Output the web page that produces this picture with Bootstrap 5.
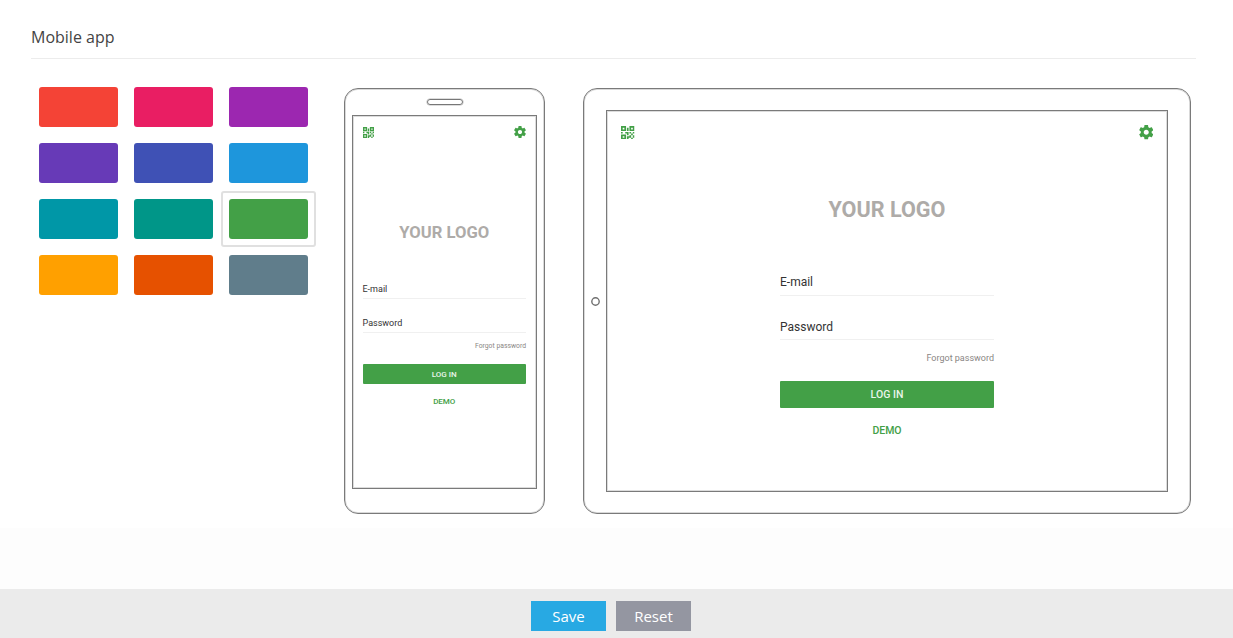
<!DOCTYPE html>
<html lang="en">
<head>
<meta charset="utf-8">
<meta name="viewport" content="width=device-width, initial-scale=1">
<title>Mobile app</title>
<link href="https://cdn.jsdelivr.net/npm/bootstrap@5.3.0/dist/css/bootstrap.min.css" rel="stylesheet">
<style>
body{font-family:"Open Sans",sans-serif;background:#fdfdfd;color:#444}
.page{height:638px}
.panel{height:528px;padding:26px 37px 0 31px;background:#fff}
.panel-title{font-size:16px;line-height:22px;height:33px;border-bottom:1px solid #ececec;margin:0}
.palette{display:grid;grid-template-columns:repeat(3,95px);grid-auto-rows:56px;width:285px;margin-top:20px}
.swatch{padding:6px;border:2px solid transparent;border-radius:3px}
.swatch span{display:block;height:40px;border-radius:3px}
.swatch.selected{border-color:#e0e0e0}
.device{border:1px solid #7a7a7a;box-shadow:inset 0 0 0 1px #d9d9d9;border-radius:14px;height:426px;margin-top:29px;font-family:Roboto,sans-serif}
.screen{border:1px solid #7a7a7a;box-shadow:inset 0 0 0 1px #dcdcdc;color:#333}
.phone{width:201px;margin-left:28px;padding:10px 7px 0}
.tablet{width:608px;margin-left:38px;padding:21px 22px 0 6px}
.speaker{width:36px;height:6px;border:1px solid #777;box-shadow:0 0 0 .5px #bbb;border-radius:3px;margin:0 auto 10px}
.phone .screen{height:374px;padding:10px 10px 0 9.5px}
.tablet .screen{width:562px;height:382px;padding:14px 14px 0 14px}
.home{width:9px;height:9px;margin-right:6.5px;margin-left:.5px;margin-bottom:21px;flex:none}
.green{color:#43a047}
.bar{line-height:0}
.logo{font-weight:700;color:#aeaba8;text-align:center}
.field{border-bottom:1px solid #f0f0f0}
.forgot{color:#8a8684;text-align:right}
.login{background:#43a047;color:#e9f5ea;border-radius:1px;font-weight:500;text-align:center}
.demo{font-weight:500;text-align:center}
.phone .bar{height:12px}
.phone .logo{font-size:16.6px;line-height:20px;margin-top:85px}
.phone .field{font-size:9px;line-height:12px;height:16px}
.phone .email{margin-top:40px}
.phone .password{margin-top:18px}
.phone .forgot{font-size:6.8px;line-height:10px;margin-top:8px}
.phone .login{font-size:8px;line-height:21px;height:20.5px;margin-top:12.5px}
.phone .demo{font-size:8px;line-height:12px;margin-top:12px}
.tablet .bar{height:15px}
.tablet .logo{font-size:21.6px;line-height:26px;margin-top:57px}
.tablet .form-box{width:214px;margin:0 auto}
.tablet .field{font-size:12px;line-height:16px;height:21px}
.tablet .email{margin-top:51px;height:22px}
.tablet .password{margin-top:23px}
.tablet .forgot{font-size:9px;line-height:12px;margin-top:12px}
.tablet .login{font-size:10.5px;line-height:27px;height:27px;margin-top:16.5px}
.tablet .demo{font-size:10.5px;line-height:14px;margin-top:16.5px}
.footer-bar{height:49px;background:#ebebeb;padding:12px 11px 0 0;gap:10px}
.action{width:75px;height:30px;padding:0;border:0;border-radius:0;color:#fff!important;font-size:15px;line-height:31px}
.save{background:#28a9e3!important}
.reset{background:#9496a1!important}
</style>
</head>
<body>
<svg class="d-none" xmlns="http://www.w3.org/2000/svg">
<symbol id="qr" viewBox="4 4 16 16"><path fill="currentColor" d="M4 4h6v6H4V4m16 0v6h-6V4h6m-6 11h2v-2h-2v-2h2v2h2v-2h2v2h-2v2h2v3h-2v2h-2v-2h-3v2h-2v-4h3v-1m2 0v3h2v-3h-2M4 20v-6h6v6H4M6 6v2h2V6H6m10 0v2h2V6h-2M6 16v2h2v-2H6m-2-5h2v2H4v-2m5 0h4v4h-2v-2H9v-2m2-5h2v4h-2V6z"/></symbol>
<symbol id="gear" viewBox="2 2 20 20"><path fill="currentColor" d="M19.43 12.98c.04-.32.07-.64.07-.98s-.03-.66-.07-.98l2.11-1.65c.19-.15.24-.42.12-.64l-2-3.46c-.12-.22-.39-.3-.61-.22l-2.49 1c-.52-.4-1.08-.73-1.69-.98l-.38-2.65C14.46 2.18 14.25 2 14 2h-4c-.25 0-.46.18-.49.42l-.38 2.65c-.61.25-1.17.59-1.69.98l-2.49-1c-.23-.09-.49 0-.61.22l-2 3.46c-.13.22-.07.49.12.64l2.11 1.65c-.04.32-.07.65-.07.98s.03.66.07.98l-2.11 1.65c-.19.15-.24.42-.12.64l2 3.46c.12.22.39.3.61.22l2.49-1c.52.4 1.08.73 1.69.98l.38 2.65c.03.24.24.42.49.42h4c.25 0 .46-.18.49-.42l.38-2.65c.61-.25 1.17-.59 1.69-.98l2.49 1c.23.09.49 0 .61-.22l2-3.46c.12-.22.07-.49-.12-.64l-2.11-1.65zM12 15.5c-1.93 0-3.5-1.57-3.5-3.5s1.57-3.5 3.5-3.5 3.5 1.57 3.5 3.5-1.57 3.5-3.5 3.5z"/></symbol>
</svg>
<div class="page d-flex flex-column justify-content-between">
<main class="panel">
<h1 class="panel-title fw-normal">Mobile app</h1>
<div class="d-flex align-items-start">
<div class="palette flex-shrink-0">
<div class="swatch"><span style="background:#f44336"></span></div>
<div class="swatch"><span style="background:#e91e63"></span></div>
<div class="swatch"><span style="background:#9c27b0"></span></div>
<div class="swatch"><span style="background:#673ab7"></span></div>
<div class="swatch"><span style="background:#3f51b5"></span></div>
<div class="swatch"><span style="background:#1e96dc"></span></div>
<div class="swatch"><span style="background:#0097a7"></span></div>
<div class="swatch"><span style="background:#009688"></span></div>
<div class="swatch selected"><span style="background:#43a047"></span></div>
<div class="swatch"><span style="background:#ffa000"></span></div>
<div class="swatch"><span style="background:#e65100"></span></div>
<div class="swatch"><span style="background:#607d8b"></span></div>
</div>
<section class="device phone flex-shrink-0">
<div class="speaker"></div>
<div class="screen">
<div class="bar green d-flex justify-content-between align-items-center"><svg width="11" height="11"><use href="#qr"/></svg><svg width="12" height="12"><use href="#gear"/></svg></div>
<div class="logo">YOUR LOGO</div>
<div class="field email">E-mail</div>
<div class="field password">Password</div>
<div class="forgot">Forgot password</div>
<div class="login">LOG IN</div>
<div class="demo green">DEMO</div>
</div>
</section>
<section class="device tablet d-flex flex-shrink-0">
<svg class="home align-self-center" viewBox="0 0 9 9"><circle cx="4.5" cy="4.5" r="3.7" fill="none" stroke="#707070" stroke-width="1.4"/></svg>
<div class="screen flex-shrink-0">
<div class="bar green d-flex justify-content-between align-items-center"><svg width="13.5" height="13.5"><use href="#qr"/></svg><svg width="14.5" height="14.5"><use href="#gear"/></svg></div>
<div class="logo">YOUR LOGO</div>
<div class="form-box">
<div class="field email">E-mail</div>
<div class="field password">Password</div>
<div class="forgot">Forgot password</div>
<div class="login">LOG IN</div>
<div class="demo green">DEMO</div>
</div>
</div>
</section>
</div>
</main>
<footer class="footer-bar d-flex justify-content-center">
<button class="btn action save" type="button">Save</button>
<button class="btn action reset" type="button">Reset</button>
</footer>
</div>
<script src="https://cdn.jsdelivr.net/npm/bootstrap@5.3.0/dist/js/bootstrap.bundle.min.js"></script>
</body>
</html>
